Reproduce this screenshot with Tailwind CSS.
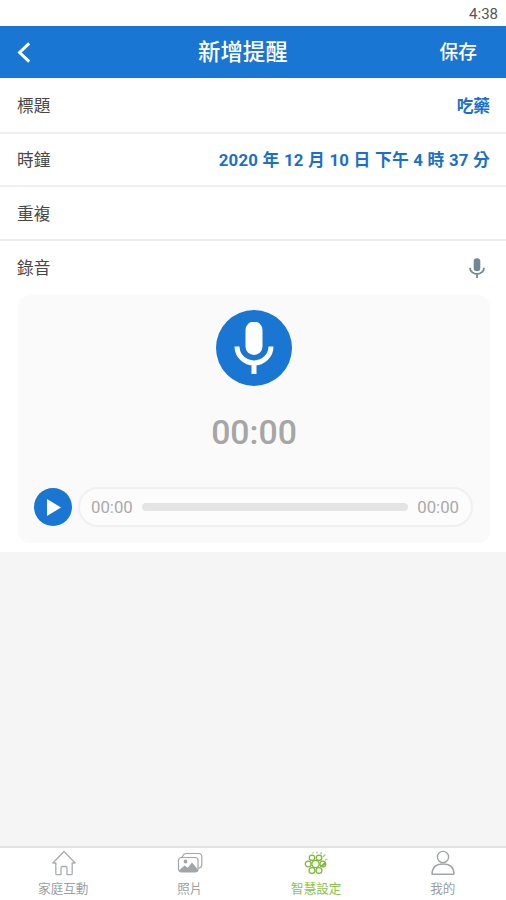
<!DOCTYPE html>
<html lang="zh-Hant">
<head>
    <meta charset="UTF-8">
    <meta name="viewport" content="width=device-width, initial-scale=1.0">
    <title>新增提醒</title>
    <script src="https://cdn.jsdelivr.net/npm/@tailwindcss/browser@4"></script>
</head>
<body class="flex h-[900px] w-[506px] flex-col overflow-hidden bg-[#f5f5f5] font-[Roboto,'Noto_Sans_CJK_TC',sans-serif] text-[#484848]">
    <!-- Status bar -->
    <div class="flex h-[26px] shrink-0 items-center justify-end bg-white pt-[3px] pr-2 text-[15px] leading-none text-[#555]">4:38</div>

    <!-- Header -->
    <header class="grid h-[52px] shrink-0 grid-cols-[198px_1fr_auto] items-center bg-[#1976d2] pr-[29px] text-white">
        <button class="pl-[17px]" aria-label="返回">
            <svg class="h-[21px] w-[14px]" viewBox="0 0 14 21" fill="none" stroke="currentColor" stroke-width="3">
                <path d="M12.2 1.3 2.6 10.5l9.6 9.2"/>
            </svg>
        </button>
        <h1 class="pt-px text-[22.4px] leading-none font-medium">新增提醒</h1>
        <button class="pt-[3px] text-[18.8px] leading-none font-medium">保存</button>
    </header>

    <!-- Form -->
    <main class="h-[474px] shrink-0 bg-white text-[16.7px] leading-none">
        <div class="flex h-[56px] items-center justify-between border-b-2 border-[#efefef] px-[17px] pt-[5px] pr-4">
            <span>標題</span>
            <span class="font-bold text-[#1a70c8]">吃藥</span>
        </div>
        <div class="flex h-[53px] items-center justify-between border-b-2 border-[#efefef] px-[17px] pt-[3px] pr-4">
            <span>時鐘</span>
            <span class="-mt-[2px] text-[16.8px] font-bold tracking-[0.22px] text-[#1a70c8]">2020 年 12 月 10 日 下午 4 時 37 分</span>
        </div>
        <div class="flex h-[54px] items-center justify-between border-b-2 border-[#efefef] px-[17px] pt-[5px]">
            <span>重複</span>
        </div>
        <div class="flex h-[54px] items-center justify-between pt-[3px] pr-[21px] pl-[17px]">
            <span>錄音</span>
            <svg class="-mt-[3px] h-[20px] w-[16px]" viewBox="0 0 16 20">
                <rect x="4.7" y="0.2" width="6.6" height="13" rx="3.3" fill="#718893"/>
                <path d="M1 9.8a7 6.2 0 0 0 14 0M8 16v4" fill="none" stroke="#718893" stroke-width="1.8"/>
            </svg>
        </div>

        <!-- Recorder -->
        <section class="mx-[18px] flex h-[248px] w-[472px] flex-col items-center rounded-xl bg-[#fafafa] pt-[15px]">
            <button class="flex size-[76px] shrink-0 items-center justify-center rounded-full bg-[#1976d2]" aria-label="錄音">
                <svg class="h-[52px] w-[40px]" viewBox="0 0 40 52">
                    <rect x="11.5" y="-0.5" width="17" height="33.5" rx="8.5" fill="#fff"/>
                    <path d="M3 24.5a17 16.5 0 0 0 34 0M20 40v12" fill="none" stroke="#fff" stroke-width="5"/>
                </svg>
            </button>
            <div class="mt-[29px] text-[33.8px] leading-[36px] font-medium text-[#a6a6a6]">00:00</div>
            <div class="mt-[36px] flex w-full items-center gap-[6px] pl-4">
                <button class="flex size-[38px] items-center justify-center rounded-full bg-[#1976d2]" aria-label="播放">
                    <svg class="ml-[2px] h-[17px] w-[14px]" viewBox="0 0 14 17"><path d="M0 0v17l14-8.5z" fill="#fff"/></svg>
                </button>
                <div class="flex h-[40px] w-[395px] items-center gap-[9px] rounded-full border-2 border-[#f0f0f0] bg-[#fcfcfc] pr-[12px] pl-[11px] text-[16.8px] text-[#aaa]">
                    <span>00:00</span>
                    <div class="h-2 flex-1 rounded-full bg-[#e4e4e4]"></div>
                    <span>00:00</span>
                </div>
            </div>
        </section>
    </main>

    <!-- Tab bar -->
    <nav class="mt-auto grid h-[54px] shrink-0 grid-cols-4 border-t-2 border-[#e4e4e4] bg-white text-[12.6px] leading-none text-[#9b9fa1]">
        <a class="flex flex-col items-center gap-[7px] pt-[2px]">
            <svg class="ml-px h-[26px] w-[26px]" viewBox="0 0 26 26" fill="none" stroke="#a9adaf" stroke-width="1.3" stroke-linejoin="round">
                <path d="M13 1.5 1.8 13h3v10.5q0 1.2 1.2 1.2h4V18q0-1.5 1.5-1.5h3q1.5 0 1.5 1.5v6.7h4q1.2 0 1.2-1.2V13h3z"/>
            </svg>
            <span>家庭互動</span>
        </a>
        <a class="flex flex-col items-center gap-[7px] pt-[2px]">
            <svg class="h-[26px] w-[26px]" viewBox="0 0 26 26" fill="none" stroke="#a2a6a8" stroke-width="1.2" stroke-linejoin="round">
                <path d="M5 7.5 6 5.5q.8-2 3-2h12.5q3.3 0 3.3 3.3v8q0 2.8-3.3 3.6"/>
                <rect x="1.5" y="7.5" width="19.5" height="14.5" rx="3"/>
                <path d="M2 20.5 7.5 15.5l3.2 2.3L15 12.5l6 7.2q-.5 2.3-2 2.3H4q-1.5 0-2-1.5z" fill="#a2a6a8" stroke="none"/>
                <circle cx="8.5" cy="11.5" r="1.3" fill="#a2a6a8"/>
            </svg>
            <span>照片</span>
        </a>
        <a class="flex flex-col items-center gap-[7px] pt-[2px] text-[#8bc34a]">
            <svg class="h-[26px] w-[26px]" viewBox="0 0 26 26" fill="none" stroke="#7cb93a" stroke-width="1.3">
                <!-- core with six petals -->
                <circle cx="12.5" cy="14" r="3.6"/>
                <circle cx="9" cy="7.8" r="2.7"/>
                <circle cx="16" cy="7.8" r="2.7"/>
                <circle cx="5.2" cy="14" r="2.9"/>
                <circle cx="19.8" cy="14" r="2.9"/>
                <circle cx="9" cy="20.6" r="2.9"/>
                <circle cx="16" cy="20.6" r="2.9"/>
                <path d="M18.5 16.500l4-4" stroke-width="2"/>
                <path d="M10 2v1.500M14 1.500v2M18.500 2l-.8 2.500M22.500 4.500l-3 2.800M24.500 9l-2.500.8" stroke="#a5d16f"/>
            </svg>
            <span>智慧設定</span>
        </a>
        <a class="flex flex-col items-center gap-[7px] pt-[2px]">
            <svg class="h-[26px] w-[26px]" viewBox="0 0 26 26" fill="none" stroke="#a2a6a8" stroke-width="1.4">
                <circle cx="13" cy="7" r="5.6"/>
                <path d="M2 24.3q0-10.3 11-10.3t11 10.3z" stroke-linejoin="round"/>
            </svg>
            <span>我的</span>
        </a>
    </nav>
</body>
</html>
